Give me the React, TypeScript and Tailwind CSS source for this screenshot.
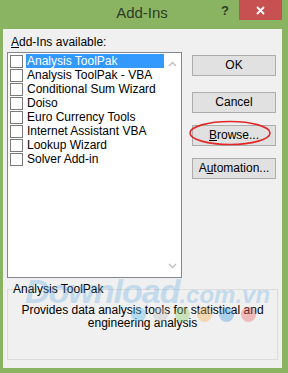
const items = [
  'Analysis ToolPak',
  'Analysis ToolPak - VBA',
  'Conditional Sum Wizard',
  'Doiso',
  'Euro Currency Tools',
  'Internet Assistant VBA',
  'Lookup Wizard',
  'Solver Add-in',
];

const font = { fontFamily: '"Segoe UI", "Liberation Sans", Arial, sans-serif' };

function DialogButton({ children, circled }: { children: React.ReactNode; circled?: boolean }) {
  return (
    <div className="relative">
      <button className="w-[84px] h-[21px] border border-[#adadad] bg-[#e1e1e1] text-[12px] text-black leading-none">
        {children}
      </button>
      {circled && (
        <svg className="absolute left-[-3px] top-[-2px] pointer-events-none" width="84" height="26" viewBox="0 0 84 26">
          <ellipse cx="41" cy="13" rx="40" ry="11.5" fill="none" stroke="#e02828" strokeWidth="1.6" />
        </svg>
      )}
    </div>
  );
}

export default function App() {
  return (
    <div className="w-[288px] h-[373px] bg-[#8bb462] flex flex-col overflow-hidden" style={font}>
      {/* Title bar */}
      <div className="relative h-[29px] shrink-0 flex items-center justify-center">
        <span className="text-[15px] text-[#2f3b28] mt-[-3px] ml-[-4px]">Add-Ins</span>
        <span className="absolute left-[221px] top-[1px] text-[13px] font-bold text-[#2f3b28]">?</span>
        <div className="absolute left-[239px] top-0 w-[43px] h-[20px] bg-[#c75050] flex items-center justify-center">
          <svg width="9" height="9" viewBox="0 0 9 9">
            <path d="M1 1 L8 8 M8 1 L1 8" stroke="#fff" strokeWidth="1.8" />
          </svg>
        </div>
      </div>

      {/* Dialog body */}
      <div className="relative ml-[3px] mr-[6px] mb-[5px] flex-1 bg-[#f0f0f0] px-[4px] pt-[6px]">
        <div className="text-[12px] text-black leading-[15px] ml-[4px]">
          <span className="underline">A</span>dd-Ins available:
        </div>
        <div className="flex gap-[10px] mt-[2px]">
          {/* List box */}
          <div className="w-[175px] h-[226px] border border-[#828790] bg-white flex">
            <div className="flex-1 pt-[1px]">
              {items.map((item, i) => (
                <div key={item} className="flex items-center h-[14px]">
                  <div className="w-[13px] h-[13px] border border-[#7a7a7a] bg-white ml-[2px] mr-[3px] shrink-0" />
                  <span
                    className={
                      'text-[12px] leading-[14px] pl-[1px] flex-1 whitespace-nowrap ' +
                      (i === 0 ? 'bg-[#3399ff] text-white' : 'text-black')
                    }
                  >
                    {item}
                  </span>
                </div>
              ))}
            </div>
            <div className="w-[17px] flex flex-col justify-between items-center py-[8px]">
              <svg width="9" height="6" viewBox="0 0 9 6">
                <path d="M1 5 L4.5 1.5 L8 5" fill="none" stroke="#c2c2c2" strokeWidth="1.5" />
              </svg>
              <svg width="9" height="6" viewBox="0 0 9 6">
                <path d="M1 1 L4.5 4.5 L8 1" fill="none" stroke="#c2c2c2" strokeWidth="1.5" />
              </svg>
            </div>
          </div>

          {/* Buttons */}
          <div className="flex flex-col gap-[13px]">
            <DialogButton>OK</DialogButton>
            <DialogButton>Cancel</DialogButton>
            <div className="mt-[-4px] flex flex-col gap-[9px]">
              <DialogButton circled>
                <span className="underline">B</span>rowse...
              </DialogButton>
              <DialogButton>
                A<span className="underline">u</span>tomation...
              </DialogButton>
            </div>
          </div>
        </div>

        {/* Description group */}
        <div className="relative mt-[11px] h-[71px] border border-[#dcdcdc]">
          <span className="absolute left-[5px] top-[-8px] text-[12px] leading-[15px] text-black">Analysis ToolPak</span>
          <p className="text-[12px] leading-[13px] text-black text-center mt-[14px] px-[4px]">
            Provides data analysis tools for statistical and
            <br />
            engineering analysis
          </p>
        </div>

        {/* Watermark overlay */}
        <div className="absolute left-[22px] top-[237px] pointer-events-none select-none">
          <span
            className="text-[34px] font-bold italic text-[#5aa9e6] opacity-30 tracking-[-1px]"
            style={{ fontFamily: '"Liberation Sans", Arial, sans-serif' }}
          >
            Download
          </span>
          <span
            className="text-[24px] font-bold italic text-[#5aa9e6] opacity-30"
            style={{ fontFamily: '"Liberation Sans", Arial, sans-serif' }}
          >
            .com.vn
          </span>
        </div>
        <div className="absolute left-[128px] top-[278px] flex gap-[7px] pointer-events-none opacity-40">
          <div className="w-[15px] h-[15px] rounded-full bg-[#5ec0ee]" />
          <div className="w-[15px] h-[15px] rounded-full bg-[#c8c8c8]" />
          <div className="w-[15px] h-[15px] rounded-full bg-[#8fd170]" />
          <div className="w-[15px] h-[15px] rounded-full bg-[#f5b356]" />
          <div className="w-[15px] h-[15px] rounded-full bg-[#4a9fe0]" />
          <div className="w-[15px] h-[15px] rounded-full bg-[#f06a6a]" />
        </div>
      </div>
    </div>
  );
}
